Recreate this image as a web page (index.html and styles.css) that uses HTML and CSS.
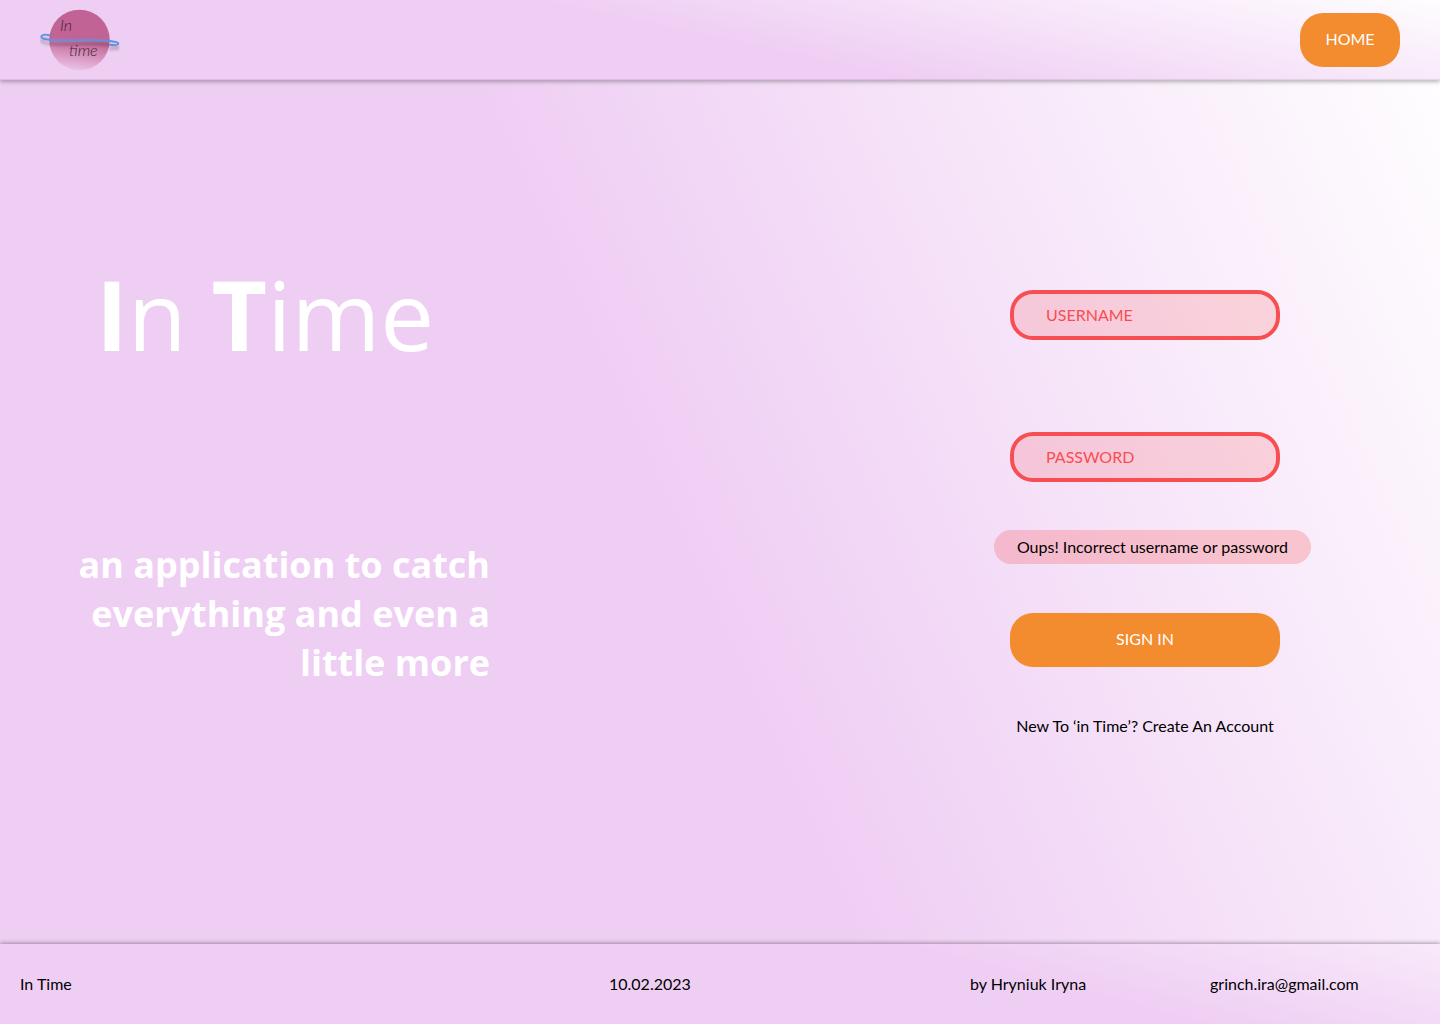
FILE: index.html
```html
<!DOCTYPE html>
<html lang="en">
<head>
  <meta charset="utf-8">
  <meta name="viewport" content="width=device-width, initial-scale=1">
  <title>In Time – Sign in</title>
  <link rel="stylesheet" href="styles.css">
</head>
<body class="page">
  <header class="header">
    <a class="logo" href="#" aria-label="In Time">
      <svg width="80" height="64" viewBox="0 0 80 64" aria-hidden="true">
        <defs>
          <linearGradient id="planet" x1="0.55" y1="0" x2="0.42" y2="1">
            <stop offset="0" stop-color="#c16394"/>
            <stop offset="0.5" stop-color="#c16394"/>
            <stop offset="1" stop-color="#ebc3e8"/>
          </linearGradient>
          <filter id="ring-shadow" x="-10%" y="-50%" width="120%" height="250%">
            <feDropShadow dx="0" dy="4" stdDeviation="1.5" flood-color="#000" flood-opacity="0.28"/>
          </filter>
        </defs>
        <circle cx="39.5" cy="32" r="30.3" fill="url(#planet)"/>
        <text class="logo-text" x="20" y="23">In</text>
        <text class="logo-text" x="29" y="48">time</text>
        <path d="M9.500 27.200C4 26 1.300 27 1.300 28.700C1.300 31 10 32.200 18 32.400C36 32.800 56 31.500 68 32.700C76 33.600 78.600 34.500 78.300 35.800C78 37 74 37.200 70 36.700" fill="none" stroke="#5d93de" stroke-width="1.900" stroke-linecap="round" filter="url(#ring-shadow)"/>
      </svg>
    </a>
    <button class="button" type="button">HOME</button>
  </header>

  <main class="main">
    <section class="intro">
      <h1 class="title"><b>I</b>n <b>T</b>ime</h1>
      <p class="tagline">an application to catch everything and even a little more</p>
    </section>

    <form class="form">
      <input class="field" type="text" placeholder="USERNAME" aria-label="Username">
      <input class="field field-password" type="password" placeholder="PASSWORD" aria-label="Password">
      <p class="error" role="alert">Oups! Incorrect username or password</p>
      <button class="button button-wide" type="button">SIGN IN</button>
      <a class="register" href="#">New To ‘in Time’? Create An Account</a>
    </form>
  </main>

  <footer class="footer">
    <span>In Time</span>
    <time datetime="2023-02-10">10.02.2023</time>
    <span>by Hryniuk Iryna</span>
    <a class="mail" href="mailto:grinch.ira@gmail.com">grinch.ira@gmail.com</a>
  </footer>
</body>
</html>
```
FILE: styles.css
```css
* {
  box-sizing: border-box;
}

.page {
  display: flex;
  flex-direction: column;
  min-height: 100vh;
  margin: 0;
  background: #efcef4;
  color: #000;
  font: 16px/22px Lato, sans-serif;
}

.header {
  position: relative;
  display: flex;
  align-items: center;
  justify-content: space-between;
  min-height: 80px;
  padding: 0 40px;
  border-bottom: 1px solid rgba(0, 0, 0, 0.08);
  background: linear-gradient(12deg, #efcef4 50%, #fff 102%) border-box;
  box-shadow: 0 2px 4px rgba(0, 0, 0, 0.28);
}

.logo {
  display: block;
  height: 64px;
}

.logo-text {
  fill: #3d2436;
  font: italic 300 16px Lato, sans-serif;
}

.button {
  width: 100px;
  height: 54px;
  padding: 0 0 2px;
  border: 0;
  border-radius: 23px;
  background: #f28c2e;
  color: #fff;
  font: inherit;
}

.main {
  display: flex;
  flex: 1;
  justify-content: space-between;
  padding: 168px 128px 80px 70px;
  background: linear-gradient(66deg, #efcef4 47%, #fff 102%);
}

.intro {
  width: 420px;
  color: #fff;
  font-family: "Open Sans", sans-serif;
}

.title {
  margin: 0 0 161px;
  padding-left: 26px;
  font-size: 96px;
  font-weight: 400;
  line-height: 131px;
}

.tagline {
  margin: 0;
  font-size: 36px;
  font-weight: 700;
  line-height: 49px;
  text-align: right;
}

.form {
  display: flex;
  flex-direction: column;
  align-items: center;
  width: 270px;
  margin: 42px 32px 0 0;
}

.field {
  width: 100%;
  height: 50px;
  padding: 0 32px 2px;
  border: 4px solid #f64e51;
  border-radius: 23px;
  background: rgba(249, 76, 76, 0.18) padding-box;
  color: #f64e51;
  font: inherit;
}

.field::placeholder {
  color: #f64e51;
  opacity: 1;
}

.field-password {
  margin-top: 92px;
}

.error {
  align-self: flex-start;
  width: 317px;
  margin: 48px 0 49px -16px;
  padding: 6px 0;
  border-radius: 17px;
  background: rgba(249, 76, 76, 0.25);
  text-align: center;
}

.button-wide {
  width: 100%;
}

.register {
  margin-top: 48px;
  color: inherit;
  text-decoration: none;
  white-space: nowrap;
}

.footer {
  position: relative;
  display: grid;
  grid-template-columns: 589fr 361fr 240fr 210fr;
  align-items: center;
  min-height: 80px;
  padding: 0 20px;
  background: linear-gradient(15deg, #efcef4 69%, #f8e9fa);
  box-shadow: 0 -1px 4px rgba(0, 0, 0, 0.35);
}

.mail {
  color: inherit;
  text-decoration: none;
}
```
